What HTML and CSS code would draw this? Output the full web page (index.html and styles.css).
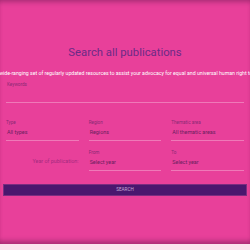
FILE: index.html
```html
<!DOCTYPE html>
<html>
<head>
<meta charset="utf-8">
<link rel="stylesheet" href="styles.css">
</head>
<body>
<section class="search">
  <h1 class="title">Search all publications</h1>
  <p class="intro">Explore our wide-ranging set of regularly updated resources to assist your advocacy for equal and universal human right to education.</p>
  <div class="field full">
    <label class="label">Keywords</label>
    <div class="line"></div>
  </div>
  <div class="grid">
    <div class="field">
      <label class="label">Type</label>
      <div class="value">All types</div>
    </div>
    <div class="field">
      <label class="label">Region</label>
      <div class="value">Regions</div>
    </div>
    <div class="field">
      <label class="label">Thematic area</label>
      <div class="value">All thematic areas</div>
    </div>
  </div>
  <div class="grid year">
    <div class="year-label">Year of publication:</div>
    <div class="field">
      <label class="label">From</label>
      <div class="value">Select year</div>
    </div>
    <div class="field">
      <label class="label">To</label>
      <div class="value">Select year</div>
    </div>
  </div>
  <button class="btn">SEARCH</button>
</section>
</body>
</html>
```
FILE: styles.css
```css
html, body {
  margin: 0;
  padding: 0;
  background: #fbe3ee;
}
body {
  font-family: Roboto, "Liberation Sans", sans-serif;
  width: 250px;
  height: 250px;
  overflow: hidden;
}
.search {
  height: 244px;
  box-sizing: border-box;
  background: #e8409a;
  box-shadow: inset 0 5px 5px -3px rgba(90, 20, 70, 0.45), inset 0 -6px 5px -3px rgba(90, 20, 70, 0.45);
  padding: 46px 6px 0;
  overflow: hidden;
}
.title {
  margin: 0;
  text-align: center;
  font-weight: 400;
  font-size: 11.3px;
  line-height: 14px;
  color: #6c2a86;
}
.intro {
  margin: 10px -90px 0;
  text-align: center;
  white-space: nowrap;
  font-size: 5.2px;
  line-height: 6px;
  color: #ffffff;
}
.field {
  display: flex;
  flex-direction: column;
}
.full {
  margin-top: 6px;
}
.label {
  font-size: 4.6px;
  line-height: 6px;
  color: #8a2a74;
}
.full .label {
  padding-left: 1px;
}
.line {
  height: 14px;
  border-bottom: 1px solid rgba(255, 255, 255, 0.3);
}
.grid {
  display: grid;
  grid-template-columns: 1fr 1fr 1fr;
  column-gap: 10px;
  margin-top: 17px;
}
.value {
  font-size: 5.4px;
  line-height: 7px;
  color: #6a1f5e;
  padding: 3px 1px 4px;
  border-bottom: 1px solid rgba(255, 255, 255, 0.3);
}
.year {
  margin-top: 9px;
}
.year-label {
  align-self: end;
  text-align: right;
  font-size: 5.4px;
  line-height: 7px;
  color: #a52b80;
  padding-bottom: 6px;
}
.btn {
  display: block;
  width: 244px;
  margin: 13px 0 0 -3px;
  height: 12px;
  padding: 0;
  border: 1px solid #7a2d80;
  background: #4a176e;
  color: #c9a7d6;
  font-family: Roboto, "Liberation Sans", sans-serif;
  font-size: 4.6px;
  line-height: 10px;
  text-align: center;
}
```
